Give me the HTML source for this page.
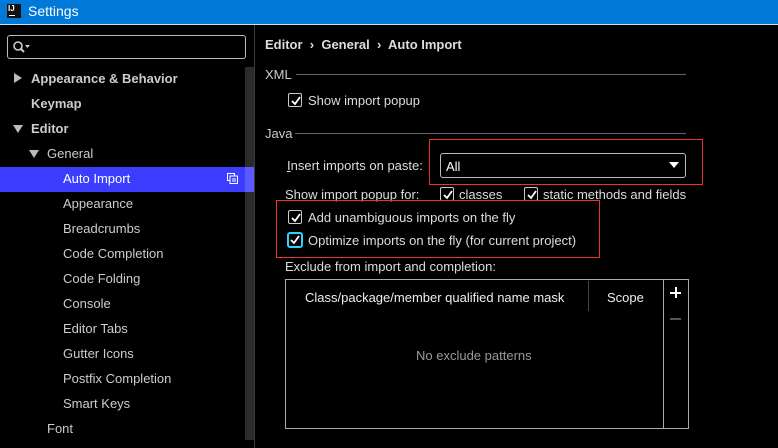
<!DOCTYPE html>
<html><head><style>
*{margin:0;padding:0;box-sizing:border-box}
body{width:778px;height:448px;background:#000;font-family:"Liberation Sans","Noto Sans CJK SC",sans-serif;font-size:13px;color:#ddd;position:relative;overflow:hidden}
.a{position:absolute;white-space:nowrap}
.cb{position:absolute;width:14px;height:14px;border:1px solid #ccc;border-radius:2px;background:#000}
.cb svg{position:absolute;left:1px;top:1px}
</style></head><body>
<div class="a" style="left:0;top:0;width:778px;height:25px;background:#0078d7;border-bottom:1px solid #cde"></div>
<div class="a" style="left:7px;top:4px;width:14px;height:14px;background:#111;color:#fff;font-size:8px;font-weight:bold;line-height:9px;padding-left:1px">IJ<div style="position:absolute;left:2px;top:11px;width:6px;height:1px;background:#fff"></div></div>
<div class="a" style="left:28px;top:3px;color:#fff;font-size:14px">Settings</div>

<div class="a" style="left:7px;top:35px;width:239px;height:24px;border:1px solid #bbb;border-radius:3px"></div>
<svg class="a" style="left:12px;top:40px" width="20" height="14"><circle cx="6" cy="6" r="4" stroke="#ccc" stroke-width="1.6" fill="none"/><line x1="9" y1="9" x2="12" y2="12" stroke="#ccc" stroke-width="2"/><path d="M13 5h5l-2.5 3z" fill="#ccc"/></svg>
<div class="a" style="left:245px;top:67px;width:9px;height:373px;background:#2b2b2b"></div>
<div class="a" style="left:254px;top:25px;width:1px;height:423px;background:#3a3a3a"></div>

<div class="a" style="left:0;top:167px;width:245px;height:25px;background:#3d3dff"></div>
<div class="a" style="left:245px;top:167px;width:9px;height:25px;background:#5a5aff"></div>
<svg class="a" style="left:227px;top:173px" width="11" height="11"><rect x="0.5" y="0.5" width="7" height="7" fill="none" stroke="#fff"/><rect x="3" y="3" width="7.5" height="7.5" fill="#3d3dff" stroke="#fff"/><line x1="5" y1="6" x2="9" y2="6" stroke="#fff"/><line x1="5" y1="8" x2="9" y2="8" stroke="#fff"/></svg>

<svg class="a" style="left:14px;top:73px" width="8" height="10"><path d="M0 0l8 5-8 5z" fill="#bbb"/></svg>
<div class="a" style="left:31px;top:71px;font-weight:bold;color:#ccc">Appearance &amp; Behavior</div>
<div class="a" style="left:31px;top:96px;font-weight:bold;color:#ccc">Keymap</div>
<svg class="a" style="left:13px;top:125px" width="10" height="8"><path d="M0 0h10l-5 8z" fill="#bbb"/></svg>
<div class="a" style="left:31px;top:121px;font-weight:bold;color:#ccc">Editor</div>
<svg class="a" style="left:29px;top:150px" width="10" height="8"><path d="M0 0h10l-5 8z" fill="#bbb"/></svg>
<div class="a" style="left:47px;top:146px;color:#ccc">General</div>
<div class="a" style="left:63px;top:171px;color:#fff">Auto Import</div>
<div class="a" style="left:63px;top:196px;color:#ccc">Appearance</div>
<div class="a" style="left:63px;top:221px;color:#ccc">Breadcrumbs</div>
<div class="a" style="left:63px;top:246px;color:#ccc">Code Completion</div>
<div class="a" style="left:63px;top:271px;color:#ccc">Code Folding</div>
<div class="a" style="left:63px;top:296px;color:#ccc">Console</div>
<div class="a" style="left:63px;top:321px;color:#ccc">Editor Tabs</div>
<div class="a" style="left:63px;top:346px;color:#ccc">Gutter Icons</div>
<div class="a" style="left:63px;top:371px;color:#ccc">Postfix Completion</div>
<div class="a" style="left:63px;top:396px;color:#ccc">Smart Keys</div>
<div class="a" style="left:47px;top:421px;color:#ccc">Font</div>

<div class="a" style="left:265px;top:37px;font-weight:bold;color:#ddd">Editor &nbsp;›&nbsp; General &nbsp;›&nbsp; Auto Import</div>
<div class="a" style="left:265px;top:67px;color:#ccc">XML</div>
<div class="a" style="left:296px;top:74px;width:390px;height:1px;background:#666"></div>
<div class="cb" style="left:288px;top:93px"><svg width="12" height="12"><path d="M2 6l3 3 5-7" stroke="#fff" stroke-width="1.8" fill="none"/></svg></div>
<div class="a" style="left:308px;top:93px;color:#ddd">Show import popup</div>
<div class="a" style="left:265px;top:126px;color:#ccc">Java</div>
<div class="a" style="left:295px;top:133px;width:391px;height:1px;background:#666"></div>

<div class="a" style="left:429px;top:139px;width:274px;height:46px;border:1px solid #e33"></div>
<div class="a" style="left:287px;top:158px;color:#ddd"><u>I</u>nsert imports on paste:</div>
<div class="a" style="left:440px;top:153px;width:246px;height:25px;border:1px solid #bbb;border-radius:3px"></div>
<div class="a" style="left:446px;top:159px;color:#fff">All</div>
<svg class="a" style="left:669px;top:162px" width="10" height="6"><path d="M0 0h10l-5 6z" fill="#fff"/></svg>

<div class="a" style="left:285px;top:187px;color:#ddd">Show import popup for:</div>
<div class="cb" style="left:440px;top:187px"><svg width="12" height="12"><path d="M2 6l3 3 5-7" stroke="#fff" stroke-width="1.8" fill="none"/></svg></div>
<div class="a" style="left:459px;top:187px;color:#ddd"><u>c</u>lasses</div>
<div class="cb" style="left:524px;top:187px"><svg width="12" height="12"><path d="M2 6l3 3 5-7" stroke="#fff" stroke-width="1.8" fill="none"/></svg></div>
<div class="a" style="left:543px;top:187px;color:#ddd"><u>s</u>tatic methods and fields</div>

<div class="a" style="left:276px;top:200px;width:324px;height:58px;border:1px solid #e33"></div>
<div class="cb" style="left:288px;top:210px"><svg width="12" height="12"><path d="M2 6l3 3 5-7" stroke="#fff" stroke-width="1.8" fill="none"/></svg></div>
<div class="a" style="left:308px;top:210px;color:#ddd">Add unambiguous imports on the fly</div>
<div class="cb" style="left:287px;top:232px;border:2px solid #29d6f6;width:16px;height:16px;border-radius:3px"><svg width="12" height="12" style="left:0;top:0"><path d="M2 6l3 3 5-7" stroke="#fff" stroke-width="1.8" fill="none"/></svg></div>
<div class="a" style="left:308px;top:233px;color:#ddd">Optimize imports on the fly (for current project)</div>

<div class="a" style="left:285px;top:259px;color:#ddd">Exclude from import and completion:</div>
<div class="a" style="left:285px;top:279px;width:404px;height:150px;border:1px solid #aaa"></div>
<div class="a" style="left:663px;top:280px;width:1px;height:148px;background:#aaa"></div>
<div class="a" style="left:588px;top:281px;width:1px;height:30px;background:#444"></div>
<div class="a" style="left:305px;top:290px;color:#eee">Class/package/member qualified name mask</div>
<div class="a" style="left:607px;top:290px;color:#eee">Scope</div>
<div class="a" style="left:670px;top:292px;width:11px;height:2px;background:#fff"></div>
<div class="a" style="left:675px;top:287px;width:2px;height:11px;background:#fff"></div>
<div class="a" style="left:670px;top:318px;width:11px;height:2px;background:#555"></div>
<div class="a" style="left:416px;top:348px;color:#999">No exclude patterns</div>
</body></html>
